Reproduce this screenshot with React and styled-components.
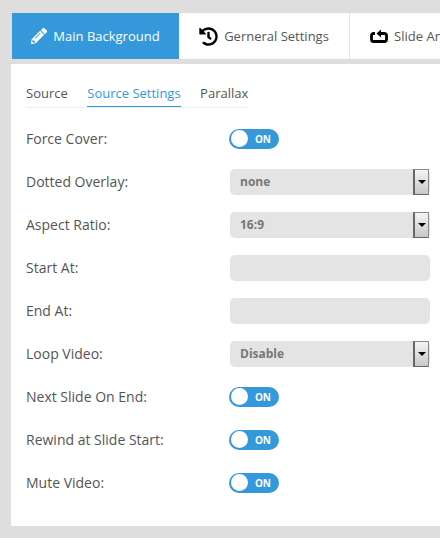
import React from 'react'
import styled, { createGlobalStyle } from 'styled-components'
import { FaPencilAlt, FaHistory } from 'react-icons/fa'

const GlobalStyle = createGlobalStyle`
	html, body {
		margin: 0;
		padding: 0;
		background: #dedede;
		overflow: hidden;
	}
	body {
		font-family: "Open Sans", "Liberation Sans", sans-serif;
	}
`

const RepeatIcon = () => (
	<svg width="18" height="14" viewBox="0 0 18 14" aria-hidden="true">
		<path d="M5 4.5h-1.500a2 2 0 0 0-2 2v4a2 2 0 0 0 2 2h11a2 2 0 0 0 2-2v-4a2 2 0 0 0-2-2h-5" fill="none" stroke="#000" strokeWidth="2.800" />
		<path d="M11 0.500 L6.500 4.500 L11 8.500z" fill="#000" />
	</svg>
)

const Toggle = () => (
	<ToggleTrack>
		<Knob />
		<ToggleLabel>ON</ToggleLabel>
	</ToggleTrack>
)

const SelectField = ({value}) => (
	<SelectBox>
		<SelectValue>{value}</SelectValue>
		<SelectArrow><Triangle /></SelectArrow>
	</SelectBox>
)

const rows = [
	{label: 'Force Cover:', type: 'toggle'},
	{label: 'Dotted Overlay:', type: 'select', value: 'none'},
	{label: 'Aspect Ratio:', type: 'select', value: '16:9'},
	{label: 'Start At:', type: 'input'},
	{label: 'End At:', type: 'input'},
	{label: 'Loop Video:', type: 'select', value: 'Disable'},
	{label: 'Next Slide On End:', type: 'toggle'},
	{label: 'Rewind at Slide Start:', type: 'toggle'},
	{label: 'Mute Video:', type: 'toggle'},
]

const App = () => (
	<Page>
		<GlobalStyle />
		<Tabs>
			<Tab $active $width={167}><FaPencilAlt size={16} />Main Background</Tab>
			<Tab $width={171}><FaHistory size={19} color="#000" />Gerneral Settings</Tab>
			<Tab $width={160}><RepeatIcon />Slide Animation</Tab>
		</Tabs>
		<Panel>
			<SubTabs>
				<SubTab>Source</SubTab>
				<SubTab $active>Source Settings</SubTab>
				<SubTab>Parallax</SubTab>
			</SubTabs>
			<Rows>
				{rows.map(row => (
					<Row key={row.label}>
						<Label>{row.label}</Label>
						{row.type === 'toggle' && <Toggle />}
						{row.type === 'select' && <SelectField value={row.value} />}
						{row.type === 'input' && <TextField />}
					</Row>
				))}
			</Rows>
		</Panel>
	</Page>
)

const Page = styled.div`
	width: 440px;
	height: 538px;
	padding-top: 13px;
	box-sizing: border-box;
	overflow: hidden;
`

const Tabs = styled.div`
	display: flex;
	height: 46px;
	margin-left: 12px;
	width: 428px;
	overflow: hidden;
`

const Tab = styled.div`
	flex: 0 0 ${props => props.$width}px;
	box-sizing: border-box;
	display: flex;
	align-items: center;
	justify-content: center;
	gap: 6px;
	white-space: nowrap;
	font-size: 13px;
	background: ${props => props.$active ? '#3498db' : '#fff'};
	color: ${props => props.$active ? '#fff' : '#555'};
	border-right: ${props => props.$active ? 'none' : '1px solid #e4e4e4'};
`

const Panel = styled.div`
	margin: 5px 0 0 11px;
	height: 462px;
	background: #fff;
	padding: 20px 10px 0 15px;
	box-sizing: border-box;
`

const SubTabs = styled.div`
	display: flex;
	gap: 19.500px;
	width: 222px;
	border-bottom: 1px solid #eee;
	height: 23px;
`

const SubTab = styled.div`
	flex: 0 0 auto;
	white-space: nowrap;
	font-size: 13px;
	line-height: 18px;
	height: 23px;
	box-sizing: border-box;
	color: ${props => props.$active ? '#3498db' : '#555'};
	border-bottom: ${props => props.$active ? '1px solid #3498db' : 'none'};
`

const Rows = styled.div`
	display: flex;
	flex-direction: column;
	margin-top: 9px;
`

const Row = styled.div`
	display: flex;
	align-items: center;
	height: 43px;
`

const Label = styled.div`
	flex: 0 0 204px;
	font-size: 14px;
	color: #555;
`

const ToggleTrack = styled.div`
	position: relative;
	width: 50px;
	height: 20px;
	margin-left: -1px;
	border-radius: 10px;
	background: #3498db;
	display: flex;
	align-items: center;
	justify-content: flex-end;
	padding-right: 8px;
	box-sizing: border-box;
`

const Knob = styled.span`
	position: absolute;
	left: 1.500px;
	top: 1.500px;
	width: 17px;
	height: 17px;
	border-radius: 50%;
	background: #fff;
`

const ToggleLabel = styled.span`
	font-size: 10px;
	font-weight: 700;
	color: #fff;
`

const SelectBox = styled.div`
	position: relative;
	width: 200px;
	height: 26px;
	border-radius: 5px;
	background: #e4e4e4;
	display: flex;
	align-items: center;
	padding-left: 10px;
	box-sizing: border-box;
`

const SelectValue = styled.span`
	font-size: 12px;
	font-weight: 700;
	color: #777;
`

const SelectArrow = styled.span`
	position: absolute;
	right: 1px;
	top: 0;
	width: 16px;
	height: 26px;
	box-sizing: border-box;
	border: 1px solid #8a8a8a;
	border-left: 2px solid #666;
	border-bottom-color: #666;
	background: linear-gradient(#f4f4f4, #c8c8c8);
	display: flex;
	align-items: center;
	justify-content: center;
`

const Triangle = styled.span`
	width: 0;
	height: 0;
	border-left: 4px solid transparent;
	border-right: 4px solid transparent;
	border-top: 4px solid #000;
`

const TextField = styled.div`
	width: 200px;
	height: 26px;
	border-radius: 5px;
	background: #e4e4e4;
`

export default App
